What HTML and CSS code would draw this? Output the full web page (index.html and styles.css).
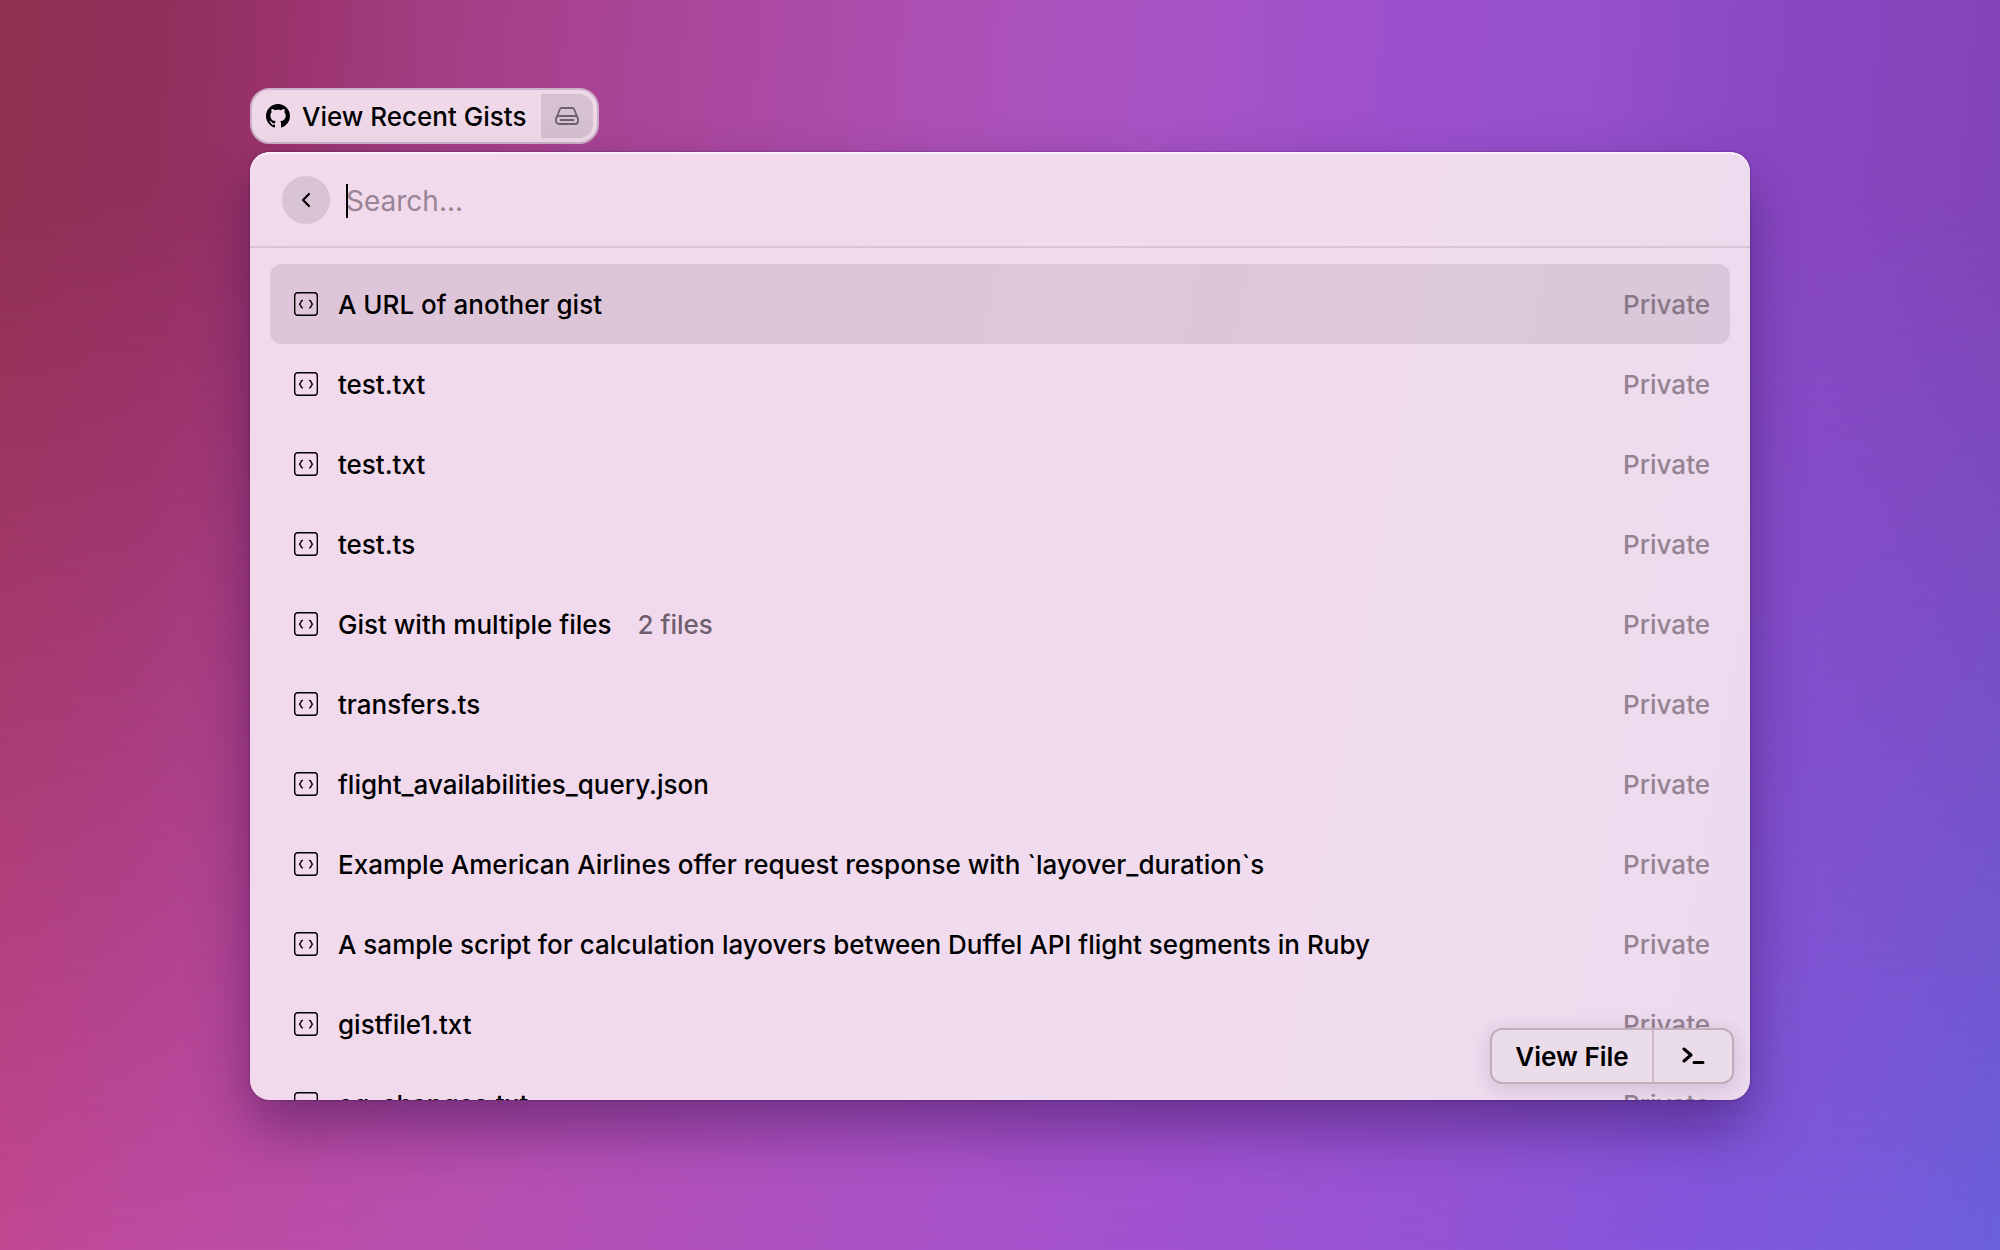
FILE: index.html
```html
<!DOCTYPE html>
<html lang="en">
<head>
<meta charset="utf-8">
<title>View Recent Gists</title>
<link rel="stylesheet" href="styles.css">
</head>
<body>
<svg class="sprite" aria-hidden="true">
  <symbol id="code" viewBox="0 0 24 24">
    <rect x="0.700" y="0.700" width="22.600" height="22.600" rx="3" fill="none" stroke="currentColor" stroke-width="1.400"/>
    <path d="M8.400 8.500Q6.900 8.700 6.900 10.400L5.600 12.200l1.300 1.800Q6.900 15.700 8.400 15.900M15.600 8.500q1.500.2 1.500 1.900l1.300 1.800-1.300 1.800q0 1.700-1.500 1.900" fill="none" stroke="currentColor" stroke-width="1.400" stroke-linecap="round" stroke-linejoin="round"/>
  </symbol>
</svg>
<main class="desktop">
  <header class="command">
    <svg class="command-logo" viewBox="0 0 16 16" aria-hidden="true"><path fill="currentColor" d="M8 0C3.580 0 0 3.580 0 8c0 3.540 2.290 6.530 5.470 7.590.4.070.55-.17.55-.38 0-.19-.01-.82-.01-1.490-2.010.37-2.530-.49-2.690-.94-.09-.23-.48-.94-.82-1.130-.28-.15-.68-.52-.01-.53.63-.01 1.080.58 1.230.82.72 1.210 1.870.87 2.330.66.07-.52.28-.87.51-1.070-1.780-.2-3.640-.89-3.640-3.950 0-.87.31-1.590.82-2.150-.08-.2-.36-1.020.08-2.120 0 0 .67-.21 2.200.82.64-.18 1.320-.27 2-.27s1.360.09 2 .27c1.530-1.040 2.200-.82 2.200-.82.44 1.100.16 1.920.08 2.120.51.56.82 1.270.82 2.150 0 3.070-1.870 3.750-3.650 3.950.29.25.54.73.54 1.480 0 1.070-.01 1.930-.01 2.200 0 .21.15.46.55.38A8.010 8.010 0 0 0 16 8c0-4.420-3.580-8-8-8z"/></svg>
    <h1 class="command-title">View Recent Gists</h1>
    <span class="command-badge">
      <svg class="drive" viewBox="0 0 24 18" aria-hidden="true"><g fill="none" stroke="currentColor" stroke-width="1.800" stroke-linejoin="round" stroke-linecap="round"><path d="M2 9.500 4.600 2.700A2.500 2.500 0 0 1 7 1h10a2.500 2.500 0 0 1 2.400 1.700L22 9.500"/><rect x="1" y="9" width="22" height="8" rx="3"/><path d="M5.500 13h13"/></g></svg>
    </span>
  </header>
  <section class="panel">
    <form class="search">
      <button class="back" type="button" aria-label="Back"><svg class="chevron" viewBox="0 0 10 16" aria-hidden="true"><path d="M8 2 2 8l6 6" fill="none" stroke="currentColor" stroke-width="2.200" stroke-linecap="round" stroke-linejoin="round"/></svg></button>
      <div class="field">
        <span class="caret"></span>
        <input class="search-input" type="text" placeholder="Search..." aria-label="Search">
      </div>
    </form>
    <ul class="list">
      <li class="row selected"><svg class="row-icon"><use href="#code"/></svg><span>A URL of another gist</span><span class="access">Private</span></li>
      <li class="row"><svg class="row-icon"><use href="#code"/></svg><span>test.txt</span><span class="access">Private</span></li>
      <li class="row"><svg class="row-icon"><use href="#code"/></svg><span>test.txt</span><span class="access">Private</span></li>
      <li class="row"><svg class="row-icon"><use href="#code"/></svg><span>test.ts</span><span class="access">Private</span></li>
      <li class="row"><svg class="row-icon"><use href="#code"/></svg><span>Gist with multiple files</span><span class="subtitle">2 files</span><span class="access">Private</span></li>
      <li class="row"><svg class="row-icon"><use href="#code"/></svg><span>transfers.ts</span><span class="access">Private</span></li>
      <li class="row"><svg class="row-icon"><use href="#code"/></svg><span>flight_availabilities_query.json</span><span class="access">Private</span></li>
      <li class="row"><svg class="row-icon"><use href="#code"/></svg><span>Example American Airlines offer request response with `layover_duration`s</span><span class="access">Private</span></li>
      <li class="row"><svg class="row-icon"><use href="#code"/></svg><span>A sample script for calculation layovers between Duffel API flight segments in Ruby</span><span class="access">Private</span></li>
      <li class="row"><svg class="row-icon"><use href="#code"/></svg><span>gistfile1.txt</span><span class="access">Private</span></li>
      <li class="row"><svg class="row-icon"><use href="#code"/></svg><span>eg_changes.txt</span><span class="access">Private</span></li>
    </ul>
    <div class="actions">
      <button class="action primary" type="button">View File</button>
      <button class="action more" type="button" aria-label="Actions"><svg class="prompt" viewBox="0 0 24 18" aria-hidden="true"><path d="M3 2l7 6-7 6M13 15.500h9" fill="none" stroke="currentColor" stroke-width="3" stroke-linecap="round" stroke-linejoin="round"/></svg></button>
    </div>
  </section>
</main>
</body>
</html>
```
FILE: styles.css
```css
* {
  box-sizing: border-box;
}

body {
  margin: 0;
  font-family: Inter, "Liberation Sans", sans-serif;
  font-size: 26px;
  font-weight: 500;
  color: #000;
}

.sprite {
  display: none;
}

.desktop {
  position: relative;
  isolation: isolate;
  display: flex;
  flex-direction: column;
  align-items: flex-start;
  gap: 8px;
  height: 100vh;
  padding: 88px 12.5% 150px;
  background: linear-gradient(93deg, #c3468a 0%, #be4ba0 10%, #b750b1 26%, #ab52c5 45%, #a052d0 60%, #9454d4 73%, #8456dc 84%, #795bdc 93%, #6b60dc 100%);
}

/* darker upper half of the wallpaper, fading into the base gradient */
.desktop::before {
  content: "";
  position: absolute;
  inset: 0;
  z-index: -1;
  background: linear-gradient(95deg, #8f3050 0%, #922f5e 9%, #9c3570 15%, #a33e84 21%, #ab479c 33%, #ac50b5 45%, #a853c4 55%, #9c50cc 67%, #9550cc 76%, #8a48c4 84%, #7e43b0 100%);
  mask-image: linear-gradient(to bottom, #000 16%, transparent 100%);
}

.command {
  display: flex;
  align-items: center;
  height: 56px;
  padding: 4px 4px 4px 14px;
  border: 2px solid #cdb0cb;
  border-radius: 20px;
  background: #efd9e9;
}

.command-logo {
  width: 24px;
  height: 24px;
}

.command-title {
  margin: 0 15px 0 12px;
  font-size: 26px;
  font-weight: 500;
}

.command-badge {
  display: flex;
  align-items: center;
  justify-content: center;
  width: 52px;
  height: 44px;
  border-radius: 0 14px 14px 0;
  background: #d6c1d2;
  color: #6f5f6d;
}

.drive {
  width: 24px;
  height: 18px;
}

.panel {
  position: relative;
  display: flex;
  flex-direction: column;
  flex: 1;
  min-height: 0;
  width: 100%;
  border-radius: 20px;
  background: linear-gradient(100deg, #f2d9ec 0%, #f1daee 40%, #f0dcee 70%, #ecdaee 100%);
  box-shadow: inset 0 2px 1px #fbf0fa, 0 0 2px rgba(30, 0, 50, 0.6), 0 28px 56px rgba(30, 5, 60, 0.42);
}

.search {
  display: flex;
  align-items: center;
  gap: 16px;
  height: 96px;
  flex: none;
  padding: 2px 32px 0;
  border-bottom: 2px solid #d9c3d7;
}

.back {
  display: flex;
  align-items: center;
  justify-content: center;
  width: 48px;
  height: 48px;
  padding: 0;
  border: 0;
  border-radius: 50%;
  background: #d8c3d5;
  color: inherit;
}

.chevron {
  width: 10px;
  height: 16px;
}

.field {
  position: relative;
  flex: 1;
}

.caret {
  position: absolute;
  top: 2px;
  left: 0;
  width: 2px;
  height: 34px;
  background: #000;
}

.search-input {
  display: block;
  width: 100%;
  height: 36px;
  padding: 2px 0 0;
  border: 0;
  outline: 0;
  background: none;
  font: inherit;
  font-size: 28px;
  font-weight: 400;
  color: inherit;
}

.search-input::placeholder {
  color: #988596;
  opacity: 1;
}

.list {
  flex: 1;
  min-height: 0;
  margin: 0;
  padding: 16px 20px 0;
  overflow: hidden;
  list-style: none;
  border-radius: 0 0 20px 20px;
}

.row {
  display: flex;
  align-items: center;
  height: 80px;
  padding: 0 20px 0 24px;
  border-radius: 12px;
  white-space: nowrap;
}

.selected {
  background: rgba(50, 25, 50, 0.1);
}

.row-icon {
  flex: none;
  width: 24px;
  height: 24px;
  margin-right: 20px;
}

.subtitle {
  margin-left: 26px;
  color: #6f5f6d;
}

.access {
  margin-left: auto;
  color: #958292;
}

.selected .access {
  color: #897787;
}

.actions {
  position: absolute;
  right: 16px;
  bottom: 16px;
  display: flex;
  height: 56px;
  border: 2px solid #bfacbd;
  border-radius: 12px;
  background: #ebdce9;
  box-shadow: 0 4px 20px rgba(60, 20, 70, 0.16);
}

.action {
  display: flex;
  align-items: center;
  justify-content: center;
  padding: 0;
  border: 0;
  background: none;
  font: inherit;
  font-weight: 600;
  color: inherit;
}

.primary {
  width: 160px;
}

.more {
  width: 80px;
  border-left: 2px solid #ccb9ca;
}

.prompt {
  width: 24px;
  height: 18px;
}
```
